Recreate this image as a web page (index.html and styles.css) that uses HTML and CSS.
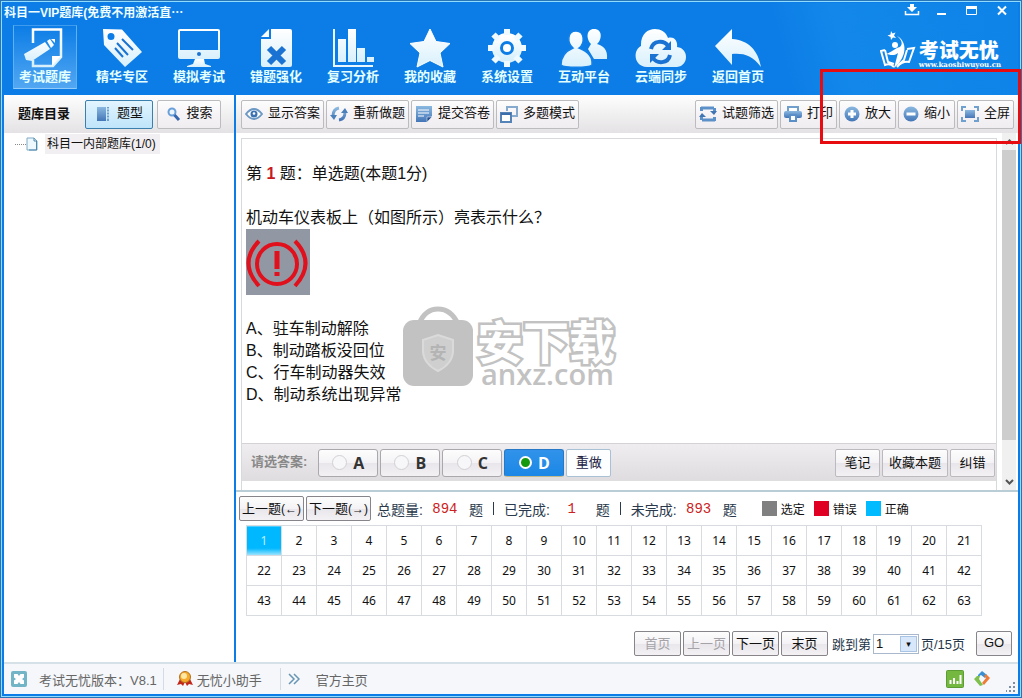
FILE: index.html
```html
<!DOCTYPE html>
<html lang="zh-CN">
<head>
<meta charset="utf-8">
<title>科目一VIP题库</title>
<link rel="stylesheet" href="styles.css">
</head>
<body>
<svg width="0" height="0" class="defs" aria-hidden="true">
  <defs>
    <linearGradient id="w" x1="0" y1="0" x2="0" y2="1"><stop offset="0" stop-color="#fff"/><stop offset="1" stop-color="#d8f0fc"/></linearGradient>
    <linearGradient id="b" x1="0" y1="0" x2="0" y2="1"><stop offset="0" stop-color="#8ab8e0"/><stop offset="1" stop-color="#4476b8"/></linearGradient>
  </defs>
</svg>
<div class="app">
  <header class="header">
    <div class="titlebar">
      <h1 class="title">科目一VIP题库(免费不用激活直⋯</h1>
      <div class="win">
        <button type="button" aria-label="下载"><svg width="16" height="14" viewBox="0 0 16 14"><path d="M6 1h4v3h3L8 9 3 4h3z" fill="#fff"/><path d="M1.500 8v3.500h13V8" stroke="#fff" stroke-width="1.500" fill="none"/></svg></button>
        <button type="button" aria-label="最小化"><svg width="16" height="14" viewBox="0 0 16 14"><path d="M3 10h9v2H3z" fill="#fff"/></svg></button>
        <button type="button" aria-label="最大化"><svg width="16" height="14" viewBox="0 0 16 14"><path d="M2.500 3.500h10v8h-10z" stroke="#fff" fill="none"/><path d="M2 3h11v3H2z" fill="#fff"/></svg></button>
        <button type="button" aria-label="关闭"><svg width="16" height="14" viewBox="0 0 16 14"><path d="M4 3.500l8 8m0-8l-8 8" stroke="#fff" stroke-width="2"/></svg></button>
      </div>
    </div>
    <div class="ribbon">
      <nav class="mainnav">
        <button type="button" class="on"><svg width="44" height="44" viewBox="0 0 44 44"><path d="M10 17V3.500h28V31l-8 9H10v-6" fill="none" stroke="url(#w)" stroke-width="2.500"/><path d="M38 30h-9v10z" fill="#fff"/><path d="M22 16l5 7-18 12-6-1-2-6zM24 15l3-2 4 6-3 3zM28 13l4 0 0 4z" fill="url(#w)"/></svg>考试题库</button>
        <button type="button"><svg width="44" height="44" viewBox="0 0 44 44"><path fill-rule="evenodd" d="M3 3l19 .5L42 26 25 41 4 19zM11 7a3.500 3.500 0 100 7 3.500 3.500 0 000-7z" fill="url(#w)"/><path d="M22 13l11 11M17 17l11 12M15 22l8 9" stroke="#1a72d2" stroke-width="2"/></svg>精华专区</button>
        <button type="button"><svg width="44" height="44" viewBox="0 0 44 44"><path fill-rule="evenodd" d="M3 3h38q2 0 2 2v26q0 2-2 2H3q-2 0-2-2V5q0-2 2-2zM3 5v19h38V5z" fill="url(#w)"/><path d="M18 33h9l1 5 6 2v1H10v-1l6-2z" fill="url(#w)"/><circle cx="22" cy="28" r="2" fill="#1a72d2"/></svg>模拟考试</button>
        <button type="button"><svg width="44" height="44" viewBox="0 0 44 44"><path d="M17 3h19q2 0 2 2v34q0 2-2 2H9q-2 0-2-2V13h10zM15 3v8H7z" fill="url(#w)"/><path d="M15 22l15 15m0-15L15 37" stroke="#1a72d2" stroke-width="6"/></svg>错题强化</button>
        <button type="button"><svg width="44" height="44" viewBox="0 0 44 44"><path d="M3 3v37h39" fill="none" stroke="#e8f7ff" stroke-width="2"/><path d="M7 13h8v23H7zM17 3h8v33h-8zM26 22h8v14h-8zM36 31h7v5h-7z" fill="url(#w)"/></svg>复习分析</button>
        <button type="button"><svg width="44" height="44" viewBox="0 0 44 44"><path d="M22 3l6 12.500 14 2-10 9.500 3 14-13-6.500L9 41l3-14L2 17.500l14-2z" fill="url(#w)" stroke="#fff" stroke-linejoin="round"/></svg>我的收藏</button>
        <button type="button"><svg width="44" height="44" viewBox="0 0 44 44"><circle cx="22" cy="22" r="11" fill="none" stroke="url(#w)" stroke-width="8"/><path d="M22 3v6M22 35v6M3 22h6M35 22h6M8.500 8.500l5 5M30.500 30.500l5 5M35.500 8.500l-5 5M13.500 30.500l-5 5" stroke="#eefaff" stroke-width="6"/><circle cx="22" cy="22" r="4" fill="#fff"/></svg>系统设置</button>
        <button type="button"><svg width="48" height="44" viewBox="0 0 48 44"><path d="M34 3c9 0 8 11 3 15 6 2 11 5 10 15H34l-6-10 3-5c-5-5-5-15 3-15z" fill="url(#w)"/><path d="M16 5c9 0 9 13 3 17 8 3 14 8 13 17-4 3-28 3-31 0 0-9 5-14 12-17-6-5-6-17 3-17z" fill="url(#w)" stroke="#1380e8" stroke-width="1.500"/></svg>互动平台</button>
        <button type="button"><svg width="52" height="44" viewBox="0 0 52 44"><path d="M12 41C-2 40-2 24 6 20 5-1 29-1 33 12c6-2 10 3 9 9 12 1 12 19 0 20z" fill="url(#w)"/><path d="M16 23c2-9 13-9 17-3M35 29c-2 9-13 9-17 3" fill="none" stroke="#1a72d2" stroke-width="4"/><path d="M36 15v9h-9zM15 37v-9h9z" fill="#1a72d2"/></svg>云端同步</button>
        <button type="button"><svg width="48" height="44" viewBox="0 0 48 44"><path d="M18 3v10c16 1 26 11 29 28-9-12-18-14-29-13v11L1 20z" fill="url(#w)"/></svg>返回首页</button>
      </nav>
      <div class="brand">
        <svg width="36" height="40" viewBox="0 0 36 40"><path d="M11 1l1.500 2.500 3-1-1.500 3 2 2.500-3-.5-2 2.500-.5-3-3-1.500 3-1z" fill="#fff"/><path d="M17 6c10 5 11 20-3 32l4-15c-5 4-9 1-12 1 6-2 9-6 14-7 3-3 2-7-3-11z" fill="#fff"/><circle cx="15" cy="15" r="3" fill="#fff"/><path d="M5 20L1 21l4 14q5-2 9 2M5 20l3 12 6 2M27 19l7-1-5 14q-7-1-12 5M27 20l-3 10-6 5" fill="none" stroke="#fff" stroke-width="2"/></svg>
        <div class="brandtext"><b>考试无忧</b><span>www.kaoshiwuyou.cn</span></div>
      </div>
    </div>
  </header>

  <aside class="side">
    <div class="bar">
      <h2>题库目录</h2>
      <button type="button" class="tool sel"><svg width="16" height="16" viewBox="0 0 16 16"><path d="M2 1h9v14H2z" fill="url(#b)"/><path d="M12 1h2v14h-2z" fill="#6c9fd0"/><path d="M12 3h2M12 6h2M12 9h2M12 12h2" stroke="#dff2ff"/></svg><span>题型</span></button>
      <button type="button" class="tool"><svg width="16" height="16" viewBox="0 0 16 16"><circle cx="6" cy="6" r="3.500" fill="#eaf5ff" stroke="#6aa0da" stroke-width="2"/><path d="M8.500 9l4.500 5" stroke="#3567b0" stroke-width="3"/></svg><span>搜索</span></button>
    </div>
    <div class="tree">
      <span class="dots"></span>
      <svg width="12" height="14" viewBox="0 0 12 14"><path d="M1 1h7l3 3v9H1z" fill="#eef8ff" stroke="#7eabc6"/><path d="M8 1v3h3M10.500 4v9H3" fill="none" stroke="#4e88ac"/></svg>
      <span class="node">科目一内部题库(1/0)</span>
    </div>
  </aside>

  <main class="main">
    <div class="bar">
      <button type="button" class="tool"><svg width="18" height="16" viewBox="0 0 18 16"><path d="M1 8q8-10 16 0-8 10-16 0z" fill="#fff" stroke="#6c98c4" stroke-width="2"/><circle cx="9" cy="8" r="3.500" fill="#3c72b2"/><circle cx="9" cy="7.500" r="1.300" fill="#fff"/></svg><span>显示答案</span></button>
      <button type="button" class="tool"><svg width="18" height="16" viewBox="0 0 18 16"><path d="M9 2Q3 3 3 10M9 14q6-1 6-8" fill="none" stroke="url(#b)" stroke-width="3"/><path d="M0 9h7l-3 5zM11 7h7l-3-5z" fill="#4c80bb"/></svg><span>重新做题</span></button>
      <button type="button" class="tool"><svg width="18" height="16" viewBox="0 0 18 16"><path d="M1 0h16v10l-5 6H1z" fill="url(#b)"/><path d="M3 4h11M3 7h11M3 10h6" stroke="#fff"/><path d="M17 11h-5v5z" fill="#244f91" stroke="#fff" stroke-width=".5"/></svg><span>提交答卷</span></button>
      <button type="button" class="tool"><svg width="18" height="17" viewBox="0 0 18 17"><path d="M7 5V1h10v9h-5" fill="none" stroke="#86aacd" stroke-width="2"/><path d="M1 7h10v9H1z" fill="#fff" stroke="#5583b8" stroke-width="2"/><path d="M1 7h10v2H1z" fill="#3b6eaa"/></svg><span>多题模式</span></button>
      <span class="grow"></span>
      <button type="button" class="tool"><svg width="18" height="16" viewBox="0 0 18 16"><path d="M2 2h13M3 14h13M15.500 2v4M2.500 10v4M2.500 1v4M15.500 11v4" stroke="#5c90c8" stroke-width="3"/><path d="M11 5h7l-3 4zM0 11h7L3 7z" fill="#4075b2"/></svg><span>试题筛选</span></button>
      <button type="button" class="tool"><svg width="18" height="16" viewBox="0 0 18 16"><path d="M4 5V1h10v4" fill="#fff" stroke="#709fcc" stroke-width="2"/><rect y="5" width="18" height="7" rx="2" fill="url(#b)"/><path d="M6 9h6v6H6z" fill="#fff" stroke="#5b8fc8" stroke-width="2"/></svg><span>打印</span></button>
      <button type="button" class="tool"><svg width="16" height="16" viewBox="0 0 16 16"><circle cx="8" cy="8" r="7.500" fill="url(#b)"/><path d="M8 4v8M4 8h8" stroke="#fff" stroke-width="3"/></svg><span>放大</span></button>
      <button type="button" class="tool"><svg width="16" height="16" viewBox="0 0 16 16"><circle cx="8" cy="8" r="7.500" fill="url(#b)"/><path d="M3.500 8h9" stroke="#fff" stroke-width="3"/></svg><span>缩小</span></button>
      <button type="button" class="tool"><svg width="18" height="16" viewBox="0 0 18 16"><path d="M4 4h10v8H4z" fill="url(#b)"/><path d="M1 5V1h4M13 1h4v4M17 11v4h-4M5 15H1v-4" fill="none" stroke="#6fa0ce" stroke-width="2"/></svg><span>全屏</span></button>
    </div>

    <div class="viewer">
      <section class="paper">
        <div class="question">
          <p>第 <b class="red">1</b> 题<span class="mid">：</span>单选题(本题1分)</p>
          <p class="stem">机动车仪表板上（如图所示）亮表示什么<span class="mid">？</span></p>
          <svg class="sign" width="64" height="66" viewBox="0 0 64 66" role="img" aria-label="仪表板指示灯"><path d="M0 0h64v66H0z" fill="#9298a3"/><g fill="none" stroke="#e0101c"><circle cx="31" cy="35" r="20" stroke-width="4"/><path d="M13 12Q-8 34 13 57M49 12q21 22 0 45" stroke-width="4"/><path d="M31 22v18M31 43v4" stroke-width="5"/></g></svg>
          <ul>
            <li>A、驻车制动解除</li>
            <li>B、制动踏板没回位</li>
            <li>C、行车制动器失效</li>
            <li>D、制动系统出现异常</li>
          </ul>
          <div class="mark">
            <svg width="72" height="82" viewBox="0 0 72 82"><path d="M17 18Q23 3 36 3t20 15" fill="none" stroke="#c2c2c2" stroke-width="5"/><rect x="1" y="14" width="70" height="66" rx="11" fill="#c2c2c2"/><path d="M36 29l15 5v12q-1 12-15 19-14-7-15-19V34z" fill="#cfcfcf" stroke="#dadada" stroke-width="2"/><text x="36" y="53" text-anchor="middle" class="shield">安</text></svg>
            <div class="marktext"><span class="markcn">安下载</span><span class="marken">anxz.com</span></div>
          </div>
        </div>
        <form class="answer">
          <span class="lbl">请选答案:</span>
          <label class="opt"><input type="radio" name="a">A</label>
          <label class="opt"><input type="radio" name="a">B</label>
          <label class="opt"><input type="radio" name="a">C</label>
          <label class="opt"><input type="radio" name="a" checked>D</label>
          <button type="button" class="act redo">重做</button>
          <span class="grow"></span>
          <button type="button" class="act">笔记</button>
          <button type="button" class="act">收藏本题</button>
          <button type="button" class="act">纠错</button>
        </form>
      </section>
      <div class="scroll">
        <svg width="14" height="17" viewBox="0 0 14 17"><path d="M4 11l3.500-3.500L11 11" fill="none" stroke="#555" stroke-width="2"/></svg>
        <div class="thumb"></div>
        <svg width="14" height="17" viewBox="0 0 14 17"><path d="M4 7l3.500 3.500L11 7" fill="none" stroke="#555" stroke-width="2"/></svg>
      </div>
    </div>

    <section class="sheet">
      <div class="stats">
        <button type="button" class="btn">上一题<small>(←)</small></button>
        <button type="button" class="btn">下一题<small>(→)</small></button>
        <p class="counts"><span>总题量:</span><i>894</i><span>题</span><span class="sep"></span><span>已完成:</span><i>1</i><span>题</span><span class="sep"></span><span>未完成:</span><i>893</i><span>题</span></p>
        <p class="legend"><span class="sw gray"></span>选定<span class="sw crimson"></span>错误<span class="sw cyan"></span>正确</p>
      </div>
      <table class="grid">
        <tr><td class="cur">1</td><td>2</td><td>3</td><td>4</td><td>5</td><td>6</td><td>7</td><td>8</td><td>9</td><td>10</td><td>11</td><td>12</td><td>13</td><td>14</td><td>15</td><td>16</td><td>17</td><td>18</td><td>19</td><td>20</td><td>21</td></tr>
        <tr><td>22</td><td>23</td><td>24</td><td>25</td><td>26</td><td>27</td><td>28</td><td>29</td><td>30</td><td>31</td><td>32</td><td>33</td><td>34</td><td>35</td><td>36</td><td>37</td><td>38</td><td>39</td><td>40</td><td>41</td><td>42</td></tr>
        <tr><td>43</td><td>44</td><td>45</td><td>46</td><td>47</td><td>48</td><td>49</td><td>50</td><td>51</td><td>52</td><td>53</td><td>54</td><td>55</td><td>56</td><td>57</td><td>58</td><td>59</td><td>60</td><td>61</td><td>62</td><td>63</td></tr>
      </table>
      <div class="pager">
        <button type="button" class="btn" disabled>首页</button>
        <button type="button" class="btn" disabled>上一页</button>
        <button type="button" class="btn">下一页</button>
        <button type="button" class="btn">末页</button>
        <label for="pg">跳到第</label>
        <span class="pick"><select id="pg"><option>1</option><option>2</option><option>3</option></select></span>
        <span>页/15页</span>
        <button type="button" class="btn go">GO</button>
      </div>
    </section>
  </main>

  <footer class="status">
    <svg width="16" height="16" viewBox="0 0 16 16"><rect width="16" height="16" rx="2" fill="#72b5c6"/><path d="M3 3h3.500L8 5l1.500-2H13v3.500L11 8l2 1.500V13H9.500L8 11l-1.500 2H3V9.500L5 8 3 6.500z" fill="#fff"/></svg>
    <span class="ver">考试无忧版本<span class="mid">：</span>V8.1</span>
    <span class="div"></span>
    <svg width="16" height="16" viewBox="0 0 16 16"><path d="M3 8l-3 6 4-1 2 2 2-4 2 4 2-2 4 1-3-6z" fill="#c22618"/><circle cx="8" cy="6" r="5.500" fill="#f5aa2c" stroke="#b4701d"/><circle cx="7" cy="5" r="3" fill="#ffe7a4"/></svg>
    <span class="helper">无忧小助手</span>
    <span class="div near"></span>
    <svg width="12" height="12" viewBox="0 0 12 12"><path d="M1 1l5 5-5 5M6 1l5 5-5 5" fill="none" stroke="#6795b4" stroke-width="1.500"/></svg>
    <a class="home" href="#">官方主页</a>
    <span class="grow"></span>
    <svg width="18" height="18" viewBox="0 0 18 18"><rect x=".5" y=".5" width="17" height="17" rx="1" fill="#75b83f" stroke="#5b9c33"/><path d="M4.500 14v-4M8 14V8M11.500 14v-3M14.500 14V5" stroke="#fff" stroke-width="2"/></svg>
    <svg class="swirl" width="16" height="16" viewBox="0 0 16 16"><path d="M4 4l4-4 5 4-2 3-4-3-3 2z" fill="#3a8fd2"/><path d="M12 3l4 4-6 7-2-2 4-5-2-2z" fill="#ee7b38"/><path d="M3 5L0 8l6 7 3-1-4-6 1-3z" fill="#7fbf4b"/></svg>
    <svg class="grip" width="10" height="10" viewBox="0 0 10 10"><path d="M7 0h2v2H7zM7 4h2v2H7zM7 8h2v2H7zM3 4h2v2H3zM3 8h2v2H3zM0 8h1v2H0z" fill="#7d8fa3"/></svg>
  </footer>
  <div class="callout"></div>
</div>
</body>
</html>
```
FILE: styles.css
```css
* { box-sizing: border-box; }
body, h1, h2, p, ul { margin: 0; padding: 0; }
body {
  font-family: "Liberation Sans", "Noto Sans CJK SC", sans-serif;
  font-size: 13px;
  color: #111;
}
button, select, input { font: inherit; color: inherit; margin: 0; }
button { padding: 0; white-space: nowrap; }
svg { flex: none; }
.defs { position: absolute; }
.grow { flex: 1; }
.mid { font-family: "Noto Sans CJK TC", sans-serif; line-height: 1; }

.app {
  position: relative;
  min-height: 100vh;
  display: grid;
  grid-template-columns: 232px 1fr;
  grid-template-rows: auto 1fr auto;
  border: 1px solid #2774b6;
  outline: 1px solid #8fdcff;
  outline-offset: -2px;
  padding: 2px 3px 3px;
  background: #0c7de6;
}

.header {
  grid-column: 1 / -1;
  height: 92px;
  background: linear-gradient(75deg, #0c7de6 0 76%, #1388ea 82%, #0e83e8 100%);
  color: #effeff;
}
.titlebar { display: flex; justify-content: space-between; height: 22px; }
.title { font-size: 12px; line-height: 21px; font-weight: 700; }
.win { display: flex; gap: 14px; padding-right: 8px; }
.win button { border: 0; background: none; height: 16px; color: #fff; }
.ribbon { display: flex; justify-content: space-between; }
.mainnav { display: flex; gap: 13px; padding-left: 9px; }
.mainnav button {
  display: flex;
  flex-direction: column;
  align-items: center;
  width: 64px;
  height: 64px;
  border: 1px solid transparent;
  background: none;
  color: #e4ffff;
  font-weight: 700;
  line-height: 14px;
}
.mainnav .on { background: linear-gradient(#0c7de6, #52a7f2); border-color: #3e9bed #60b1f3 #8fcafa; }
.brand { display: flex; padding: 5px 17px 0 0; gap: 3px; color: #fff; }
.brandtext { display: flex; flex-direction: column; padding-top: 11px; }
.brandtext b { font-size: 20px; line-height: 20px; font-weight: 900; }
.brandtext span { font: 700 7px/8px "DejaVu Serif", serif; }

.bar {
  display: flex;
  align-items: center;
  gap: 2px;
  height: 38px;
  padding: 0 4px 0 5px;
  background: linear-gradient(#fefefe, #e4e2e4);
}
.bar h2 { font-size: 13px; padding: 0 11px 4px 10px; }
.tool {
  display: flex;
  align-items: center;
  justify-content: center;
  gap: 5px;
  height: 29px;
  min-width: 57px;
  padding: 0 3px;
  border: 1px solid #bcbcc0;
  border-radius: 2px;
  background: linear-gradient(#fdfdfd, #f6f3f6 50%, #f0edf1);
}
.tool span { padding-bottom: 5px; }
.side { background: #fff; border-right: 2px solid #0c7de6; }
.side .bar { gap: 4px; padding-left: 4px; }
.side .tool { width: 64px; }
.side .sel { width: 68px; gap: 6px; border-color: #3a7fae; background: linear-gradient(#e2f5ff, #bfe4fa); }
.tree { display: flex; align-items: center; padding: 1px 0 0 11px; font-size: 12px; }
.dots { width: 11px; border-top: 1px dotted #888; }
.node { margin-left: 7px; padding: 0 4px 0 2px; line-height: 20px; background: #f1eff1; }

.main { display: flex; flex-direction: column; background: #fff; min-width: 0; }
.viewer { flex: 1; display: flex; border-bottom: 2px solid #b9cdd7; }
.paper {
  flex: 1;
  display: flex;
  flex-direction: column;
  margin: 5px 5px 0;
  padding-bottom: 9px;
  border: solid #d8d9dc;
  border-width: 1px 1px 0;
}
.question { position: relative; flex: 1; padding: 24px 4px; font-size: 16px; line-height: 22px; }
.red { color: #c81a1e; }
.stem { padding-top: 22px; }
.sign { display: block; }
.question ul { list-style: none; padding-top: 23px; }
.mark { position: absolute; left: 160px; top: 167px; display: flex; gap: 3px; color: #c2c2c2; }
.shield { font-size: 17px; font-weight: 700; fill: #b4b4b4; }
.marktext { display: flex; flex-direction: column; padding-top: 10px; }
.markcn {
  font: 700 46px/46px "Noto Sans CJK SC", sans-serif;
  color: #fff;
  -webkit-text-stroke: 5px #c2c2c2;
  paint-order: stroke fill;
}
.marken { padding-left: 4px; font: 600 29px/24px "Open Sans", sans-serif; }

.answer {
  display: flex;
  align-items: center;
  gap: 2px;
  height: 38px;
  padding: 0 1px 0 9px;
  border-top: 1px solid #d4d2d4;
  background: linear-gradient(#efedef, #dedcde);
}
.lbl { color: #888; font-weight: 700; margin-right: 9px; padding-bottom: 4px; }
.opt, .act, .btn { border: 1px solid #aaa8ac; border-radius: 3px; background: linear-gradient(#fdfdfd, #f4f2f5 50%, #e8e6ea 51%, #f3f1f4); }
.opt {
  display: flex;
  align-items: center;
  justify-content: center;
  gap: 6px;
  width: 60px;
  height: 28px;
  font: 700 16px "Open Sans", sans-serif;
  color: #333;
}
.opt input { appearance: none; width: 15px; height: 15px; border: 1px solid #d2d0d4; border-radius: 50%; background: #f7f6f8; }
.opt:has(:checked) { color: #fff; background: linear-gradient(#3193ea, #1b87e6); border-color: #2779c5 #2779c5 #c3b98b; }
.opt input:checked { width: 13px; height: 13px; border: 2px solid #fff; background: #16990e; }
.act { height: 28px; min-width: 45px; padding: 0 6px 3px; border-color: #bcbabe; border-radius: 2px; }
.redo { background: #fcfeff; border-color: #a9c1d5; color: #224; }

.sheet { padding: 4px 6px 6px 3px; }
.stats { display: flex; align-items: center; gap: 2px; }
.btn { height: 25px; width: 65px; padding-bottom: 3px; border-color: #87858a; border-radius: 2px; }
.btn small { font-size: 12px; }
.btn:disabled { color: #a5a3a8; }
.counts { display: flex; align-items: center; font-size: 14px; color: #2a3a4c; padding-left: 4px; }
.counts i { font: 14px "Liberation Mono", monospace; color: #c22; width: 44px; text-align: center; }
.counts i + span { padding-left: 2px; }
.sep { height: 13px; border-left: 1px solid #2a3a4c; margin: 0 10px; }
.legend { display: flex; align-items: center; font-size: 12px; padding-left: 23px; }
.sw { width: 15px; height: 15px; margin: 0 4px 0 9px; }
.legend .gray { margin-left: 0; background: #808080; }
.crimson { background: #e00024; }
.cyan { background: #00bbff; }
.grid {
  width: 736px;
  max-width: 100%;
  table-layout: fixed;
  margin: 4px 0 0 7px;
  border-collapse: collapse;
  font: 12px "Noto Sans", sans-serif;
}
.grid td { height: 30px; padding: 0; text-align: center; border: 1px solid #d8dbdf; }
.grid .cur { color: #bdf0ff; background: linear-gradient(#00b8ff 75%, #a6e6ff); }
.pager { display: flex; align-items: center; justify-content: flex-end; gap: 2px; padding-top: 15px; color: #25364a; }
.pager .btn { width: 47px; color: #111; }
.pager .btn:disabled { color: #a5a3a8; }
.pager label { padding-left: 2px; }
.pick { position: relative; display: flex; }
.pick::after {
  content: "▾";
  position: absolute;
  inset: 2px 2px 2px auto;
  width: 15px;
  font: 9px/14px "DejaVu Sans", sans-serif;
  text-align: center;
  color: #111;
  border: 1px solid #a8c3e4;
  background: #d9e7fa;
  pointer-events: none;
}
.pick select { appearance: none; width: 46px; height: 20px; padding: 0 2px; border: 1px solid #a9b8cc; border-radius: 0; background: #fff; color: #111; }
.pager .go { width: 36px; margin-left: 9px; }

.scroll { display: flex; flex-direction: column; width: 14px; margin-right: 2px; background: #f0f0f0; }
.thumb { flex: 1; margin-bottom: 33px; background: #cdcdcd; }

.status {
  grid-column: 1 / -1;
  display: flex;
  align-items: center;
  height: 32px;
  padding: 0 2px 0 7px;
  border-top: 2px solid #d5e0e7;
  background: #f5f7fb;
  color: #666;
}
.ver { padding: 0 6px 0 12px; }
.div { height: 22px; margin-right: 13px; border-left: 1px solid #d3dce6; }
.near { margin-right: 7px; }
.helper { padding: 0 18px 0 4px; }
.home { padding-left: 16px; color: inherit; text-decoration: none; }
.swirl { margin: 0 16px 0 10px; }
.grip { align-self: flex-end; margin-bottom: 2px; }

.callout { position: absolute; top: 68px; right: 0; width: 201px; height: 75px; border: 3px solid #e60c10; pointer-events: none; }
```
